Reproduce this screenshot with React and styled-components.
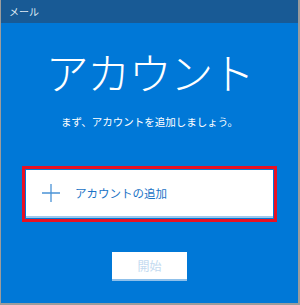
import React from 'react';
import styled, { createGlobalStyle } from 'styled-components';

const Global = createGlobalStyle`
  html, body {
    margin: 0;
    padding: 0;
    background: #ffffff;
  }

  * {
    box-sizing: border-box;
  }
`;

const Window = styled.div`
  width: 300px;
  height: 305px;
  display: flex;
  flex-direction: column;
  border-left: 1px solid #9c9c9c;
  border-right: 2px solid #9c9c9c;
  border-bottom: 2px solid #9c9c9c;
  font-family: "Noto Sans CJK JP", "Noto Sans", sans-serif;
`;

const TitleBar = styled.div`
  height: 23px;
  flex: none;
  display: flex;
  align-items: center;
  padding-left: 8px;
  background: #185a95;
  color: #dfe9f3;
  font-size: 10px;
`;

const Body = styled.div`
  flex: 1;
  display: flex;
  flex-direction: column;
  align-items: center;
  background: #0078d7;
`;

const Heading = styled.h1`
  margin: 18px 0 0;
  color: #ffffff;
  font-size: 43px;
  font-weight: 300;
  line-height: 60px;
  letter-spacing: -1.5px;
`;

const Subtitle = styled.p`
  margin: 13px 0 0;
  color: #ffffff;
  font-size: 10.5px;
  line-height: 16px;
`;

const Highlight = styled.div`
  margin-top: 36px;
  width: 255px;
  padding: 1px;
  border: 3px solid #e81123;
`;

const AddButton = styled.button`
  width: 100%;
  height: 48px;
  display: flex;
  align-items: center;
  gap: 15px;
  padding: 0 0 0 16px;
  border: none;
  border-bottom: 2px solid #9ec8ec;
  background: #ffffff;
  color: #1a73c6;
  font-family: inherit;
  font-size: 11.5px;
`;

const StartButton = styled.button`
  margin-top: 30px;
  width: 75px;
  height: 29px;
  border: none;
  border-bottom: 2px solid #8fc0ea;
  background: #ffffff;
  color: #c3daf0;
  font-family: inherit;
  font-size: 12px;
`;

function PlusIcon() {
  return (
    <svg width="18" height="18" viewBox="0 0 18 18">
      <path d="M9 0v18M0 9h18" stroke="#4a93d6" strokeWidth="1.3" fill="none" />
    </svg>
  );
}

export default function App() {
  return (
    <>
      <Global />
      <Window>
        <TitleBar>メール</TitleBar>
        <Body>
          <Heading>アカウント</Heading>
          <Subtitle>まず、アカウントを追加しましょう。</Subtitle>
          <Highlight>
            <AddButton>
              <PlusIcon />
              アカウントの追加
            </AddButton>
          </Highlight>
          <StartButton>開始</StartButton>
        </Body>
      </Window>
    </>
  );
}
